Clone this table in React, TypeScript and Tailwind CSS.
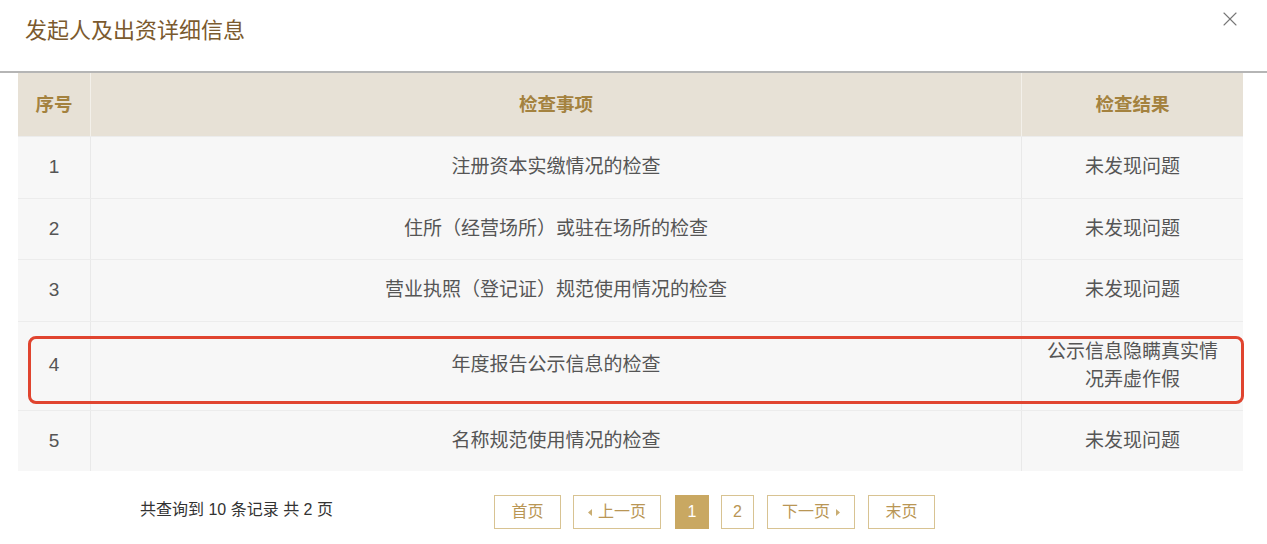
import { X } from "lucide-react";

type Row = { no: number; item: string; result: string[] };

const rows: Row[] = [
  { no: 1, item: "注册资本实缴情况的检查", result: ["未发现问题"] },
  { no: 2, item: "住所（经营场所）或驻在场所的检查", result: ["未发现问题"] },
  { no: 3, item: "营业执照（登记证）规范使用情况的检查", result: ["未发现问题"] },
  { no: 4, item: "年度报告公示信息的检查", result: ["公示信息隐瞒真实情", "况弄虚作假"] },
  { no: 5, item: "名称规范使用情况的检查", result: ["未发现问题"] },
];

function PageBtn({ children, active, w }: { children: React.ReactNode; active?: boolean; w: string }) {
  return (
    <div
      className={`${w} h-[34px] flex items-center justify-center gap-[6px] border text-[16px] ${
        active ? "bg-[#c9a862] border-[#c9a862] text-white" : "bg-white border-[#d8c392] text-[#b99655]"
      }`}
    >
      {children}
    </div>
  );
}

export default function App() {
  return (
    <div
      className="relative w-[1267px] h-[544px] bg-white overflow-hidden"
      style={{ fontFamily: '"Liberation Sans", "Noto Sans CJK SC", sans-serif' }}
    >
      {/* header */}
      <div className="h-[71px] flex items-center pl-[25px]">
        <h1 className="text-[22px] text-[#7b5a2e] -mt-[11px]">发起人及出资详细信息</h1>
      </div>
      <button className="absolute left-[1218px] top-[7px] text-[#777]">
        <X className="w-[24px] h-[24px]" strokeWidth={1.1} />
      </button>
      <div className="h-[2px] bg-[#b5b5b5]" />

      {/* table */}
      <div className="mx-[18px] w-[1225px]">
        <div className="grid grid-cols-[73px_931px_221px] h-[63px] bg-[#e7e1d6] text-[18.5px] font-bold text-[#a4823f]">
          <div className="flex items-center justify-center border-r border-[#f3f0ea]">序号</div>
          <div className="flex items-center justify-center border-r border-[#f3f0ea]">检查事项</div>
          <div className="flex items-center justify-center">检查结果</div>
        </div>
        {rows.map((r) => (
          <div
            key={r.no}
            className={`grid grid-cols-[73px_931px_221px] bg-[#f7f7f7] text-[19px] text-[#555] border-t border-[#ececec] ${
              r.result.length > 1 ? "h-[89px]" : "h-[61.5px]"
            }`}
          >
            <div className="flex items-center justify-center border-r border-[#e9e9e9]">{r.no}</div>
            <div className="flex items-center justify-center border-r border-[#e9e9e9]">{r.item}</div>
            <div className="flex flex-col items-center justify-center leading-[28px]">
              {r.result.map((t) => (
                <span key={t}>{t}</span>
              ))}
            </div>
          </div>
        ))}
      </div>

      {/* highlight annotation */}
      <div className="absolute left-[28px] top-[336px] w-[1216px] h-[68px] border-[3px] border-[#e0442f] rounded-[8px]" />

      {/* pagination */}
      <div className="mt-[24px] flex items-center">
        <div className="w-[494px] pl-[140px] text-[16px] text-[#333] -mt-[4px]">共查询到 10 条记录 共 2 页</div>
        <div className="flex">
          <PageBtn w="w-[67px]">首页</PageBtn>
          <div className="ml-[12px]">
            <PageBtn w="w-[88px]">
              <svg width="4" height="7" viewBox="0 0 4 7"><path d="M4 0L0 3.5L4 7Z" fill="#c9ad72" /></svg>
              上一页
            </PageBtn>
          </div>
          <div className="ml-[14px]">
            <PageBtn w="w-[34px]" active>1</PageBtn>
          </div>
          <div className="ml-[12px]">
            <PageBtn w="w-[33px]">2</PageBtn>
          </div>
          <div className="ml-[13px]">
            <PageBtn w="w-[88px]">
              下一页
              <svg width="4" height="7" viewBox="0 0 4 7"><path d="M0 0L4 3.5L0 7Z" fill="#c9ad72" /></svg>
            </PageBtn>
          </div>
          <div className="ml-[13px]">
            <PageBtn w="w-[67px]">末页</PageBtn>
          </div>
        </div>
      </div>
    </div>
  );
}
